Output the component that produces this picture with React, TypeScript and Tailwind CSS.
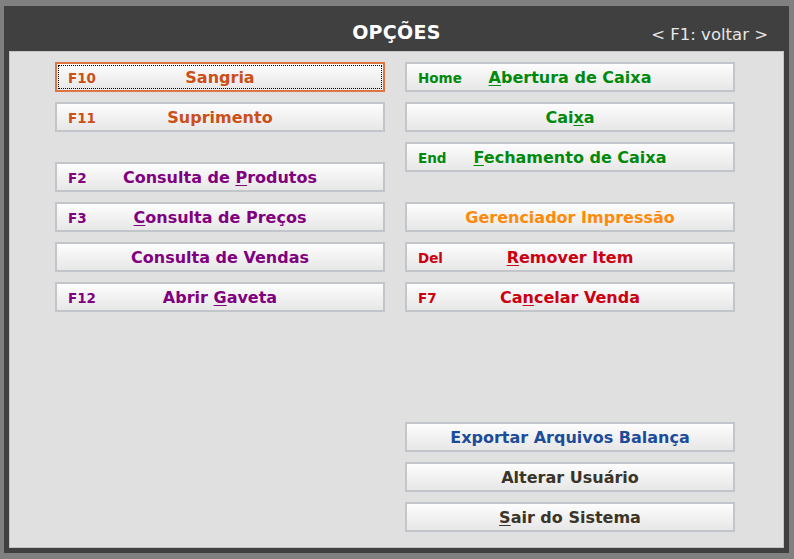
const font = { fontFamily: '"DejaVu Sans", Verdana, sans-serif' };

type Opt = {
  hotkey?: string;
  label: string;
  underline?: number;
  color: string;
  focused?: boolean;
  spaced?: string;
};

const leftOptions: Opt[] = [
  { hotkey: 'F10', label: 'Sangria', color: 'text-[#cc4f18]', focused: true },
  { hotkey: 'F11', label: 'Suprimento', color: 'text-[#cc4f18]' },
  { hotkey: 'F2', label: 'Consulta de Produtos', underline: 12, color: 'text-[#800080]', spaced: 'mt-[20px]' },
  { hotkey: 'F3', label: 'Consulta de Preços', underline: 0, color: 'text-[#800080]' },
  { label: 'Consulta de Vendas', color: 'text-[#800080]' },
  { hotkey: 'F12', label: 'Abrir Gaveta', underline: 6, color: 'text-[#800080]' },
];

const rightOptions: Opt[] = [
  { hotkey: 'Home', label: 'Abertura de Caixa', underline: 0, color: 'text-[#008a0c]' },
  { label: 'Caixa', underline: 3, color: 'text-[#008a0c]' },
  { hotkey: 'End', label: 'Fechamento de Caixa', underline: 0, color: 'text-[#008a0c]' },
  { label: 'Gerenciador Impressão', color: 'text-[#ff8a0a]', spaced: 'mt-[20px]' },
  { hotkey: 'Del', label: 'Remover Item', underline: 0, color: 'text-[#cc0010]' },
  { hotkey: 'F7', label: 'Cancelar Venda', underline: 2, color: 'text-[#cc0010]' },
  { label: 'Exportar Arquivos Balança', color: 'text-[#1d4c9a]', spaced: 'mt-[100px]' },
  { label: 'Alterar Usuário', color: 'text-[#3b3428]' },
  { label: 'Sair do Sistema', underline: 0, color: 'text-[#3b3428]' },
];

function OptionButton({ opt }: { opt: Opt }) {
  const u = opt.underline;
  return (
    <button
      type="button"
      className={`relative h-[30px] w-[330px] flex items-center justify-center border-2 bg-gradient-to-b from-[#fdfdfd] to-[#e7e7e7] ${
        opt.focused ? 'border-[#dc7540]' : 'border-[#c2c5c9]'
      } ${opt.spaced ?? ''}`}
    >
      {opt.focused && (
        <div className="absolute inset-[1px] border border-dotted border-black" />
      )}
      {opt.hotkey && (
        <span className={`absolute left-[11px] inset-y-0 flex items-center pt-[2px] text-[13.5px] font-bold ${opt.color}`}>
          {opt.hotkey}
        </span>
      )}
      <span className={`pt-[2px] text-[16px] font-bold ${opt.color}`}>
        {u === undefined ? (
          opt.label
        ) : (
          <>
            {opt.label.slice(0, u)}
            <span className="underline underline-offset-2">{opt.label[u]}</span>
            {opt.label.slice(u + 1)}
          </>
        )}
      </span>
    </button>
  );
}

export default function App() {
  return (
    <div className="w-[794px] h-[559px] bg-[#808080] pt-[6px] pl-[4px] pr-[5px] pb-[6px]" style={font}>
      <div className="h-full bg-[#404040] flex flex-col px-[5px] pb-[5px]">
        <div className="h-[45px] shrink-0 relative flex items-center justify-center">
          <h1 className="text-[19px] font-bold text-white tracking-[0.3px] mt-[7px]">OPÇÕES</h1>
          <span className="absolute right-[16px] top-[17px] text-[16.5px] text-[#e6e6e6]">
            &lt; F1: voltar &gt;
          </span>
        </div>
        <div className="flex-1 bg-[#e0e0e0] border border-[#c4c4c4] flex gap-[20px] pl-[45px] pt-[10px]">
          <div className="flex flex-col gap-[10px]">
            {leftOptions.map((o) => (
              <OptionButton key={o.label} opt={o} />
            ))}
          </div>
          <div className="flex flex-col gap-[10px]">
            {rightOptions.map((o) => (
              <OptionButton key={o.label} opt={o} />
            ))}
          </div>
        </div>
      </div>
    </div>
  );
}
